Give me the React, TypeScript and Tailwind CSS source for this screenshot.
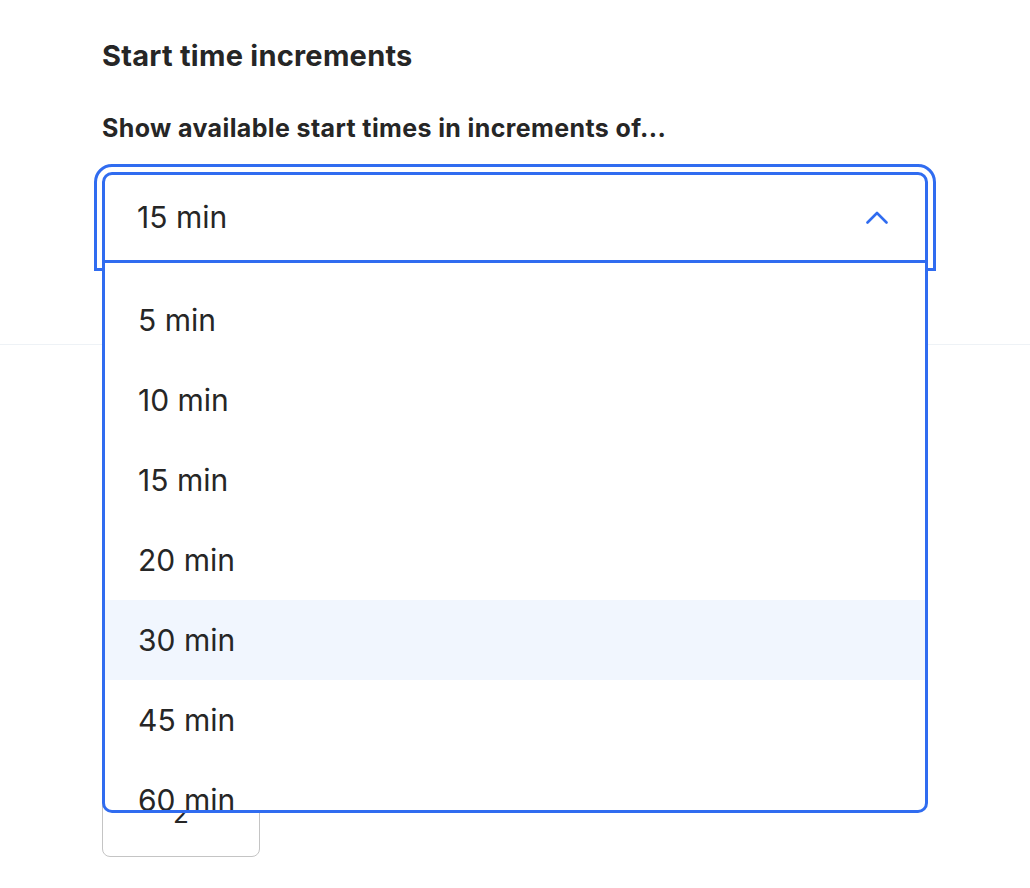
import React from "react";

const options = ["5 min", "10 min", "15 min", "20 min", "30 min", "45 min", "60 min"];

export default function App() {
  return (
    <div
      className="relative min-h-[888px] w-[1030px] overflow-hidden bg-white text-[#262626]"
      style={{ fontFamily: "Inter, 'Liberation Sans', sans-serif" }}
    >
      <div className="px-[102px] pt-[40px] pb-[81px]">
        <h2 className="text-[29px] font-bold leading-[32px] tracking-[0.25px]">Start time increments</h2>
        <p className="mt-[42px] text-[25px] font-bold leading-[28px] tracking-[0.38px]">
          Show available start times in increments of...
        </p>
        <div className="relative mt-[30px]">
          <button
            type="button"
            className="flex h-[91px] w-full items-center justify-between rounded-t-[10px] border-[3px] border-[#306cf0] bg-white pl-[32px] pr-[37px] text-[30px] text-[#262626] outline-[3px] outline-offset-[5px] outline-[#306cf0] outline-solid"
          >
            <span>15 min</span>
            <svg width="22" height="13" viewBox="0 0 22 13" fill="none">
              <path d="M1.5 11.5 L11 2 L20.5 11.5" stroke="#306cf0" strokeWidth="2.6" strokeLinecap="round" strokeLinejoin="round" />
            </svg>
          </button>
          <div className="absolute left-0 right-0 top-full z-10 h-[550px] overflow-hidden rounded-b-[10px] border-x-[3px] border-b-[3px] border-[#306cf0] bg-white pt-[17px]">
            {options.map((o) => (
              <div
                key={o}
                className={`flex h-[80px] items-center pl-[33px] text-[30px] ${o === "30 min" ? "bg-[#f1f6fe]" : ""}`}
              >
                {o}
              </div>
            ))}
          </div>
        </div>
      </div>
      <div className="border-t border-[#eef2f6] px-[102px] pt-[424px]">
        <div className="flex h-[88px] w-[158px] items-center justify-center rounded-[8px] border-[1.5px] border-[#c4c4c4] text-[26px]">
          2
        </div>
      </div>
    </div>
  );
}
